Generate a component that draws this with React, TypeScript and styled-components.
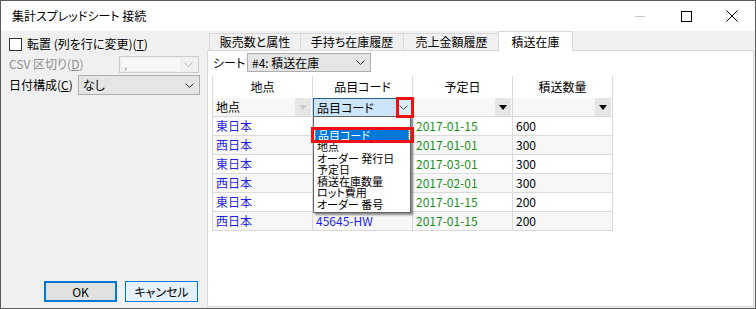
import styled, { createGlobalStyle } from 'styled-components';

const GlobalStyle = createGlobalStyle`
  * { box-sizing: border-box; }
  body {
    margin: 0;
    background: #ffffff;
    font-family: "Noto Sans CJK JP", "Liberation Sans", sans-serif;
    font-size: 12px;
    font-feature-settings: "palt";
    color: #000;
  }
`;

const rows = [
  { region: '東日本', code: '34512-PK', date: '2017-01-15', qty: '600' },
  { region: '西日本', code: '34512-PK', date: '2017-01-01', qty: '300' },
  { region: '東日本', code: '78120-AB', date: '2017-03-01', qty: '300' },
  { region: '西日本', code: '78120-AB', date: '2017-02-01', qty: '300' },
  { region: '東日本', code: '45645-HW', date: '2017-01-15', qty: '200' },
  { region: '西日本', code: '45645-HW', date: '2017-01-15', qty: '200' },
];

const fields = ['地点', 'オーダー 発行日', '予定日', '積送在庫数量', 'ロット費用', 'オーダー 番号'];

const tabs = [
  { label: '販売数と属性', width: 92 },
  { label: '手持ち在庫履歴', width: 104 },
  { label: '売上金額履歴', width: 97 },
];

function Chevron({ color = '#333' }: { color?: string }) {
  return (
    <svg width='9' height='5' viewBox='0 0 9 5'>
      <polyline points='0.5,0.5 4.5,4.5 8.5,0.5' fill='none' stroke={color} strokeWidth='1' />
    </svg>
  );
}

function Triangle({ color = '#000' }: { color?: string }) {
  return (
    <svg width='8' height='5' viewBox='0 0 8 5'>
      <polygon points='0,0 8,0 4,5' fill={color} />
    </svg>
  );
}

export default function App() {
  return (
    <>
      <GlobalStyle />
      <S.Window>
        <S.TitleBar>
          <S.Title>集計スプレッドシート 接続</S.Title>
          <S.WinControls>
            <S.WinButton>
              <svg width='10' height='10' viewBox='0 0 10 10'>
                <line x1='0' y1='5.5' x2='10' y2='5.5' stroke='#c4c4c4' strokeWidth='1' />
              </svg>
            </S.WinButton>
            <S.WinButton>
              <svg width='11' height='11' viewBox='0 0 11 11'>
                <rect x='0.5' y='0.5' width='10' height='10' fill='none' stroke='#000' strokeWidth='1' />
              </svg>
            </S.WinButton>
            <S.WinButton>
              <svg width='12' height='12' viewBox='0 0 12 12'>
                <path d='M0.5 0.5 L11.5 11.5 M11.5 0.5 L0.5 11.5' stroke='#000' strokeWidth='1' />
              </svg>
            </S.WinButton>
          </S.WinControls>
        </S.TitleBar>

        <S.Body>
          <S.LeftPanel>
            <S.OptionRow $h={20}>
              <S.CheckBox />
              <S.Label>
                転置 (列を行に変更)(<u>T</u>)
              </S.Label>
            </S.OptionRow>
            <S.OptionRow $h={18} $mt={1}>
              <S.Label $disabled>
                CSV 区切り(<u>D</u>)
              </S.Label>
              <S.Combo $w={80} $h={17} $disabled>
                <S.ComboField>,</S.ComboField>
                <Chevron color='#b8b8b8' />
              </S.Combo>
            </S.OptionRow>
            <S.OptionRow $h={20} $mt={2}>
              <S.Label>
                日付構成(<u>C</u>)
              </S.Label>
              <S.Combo $w={122} $h={20}>
                <span>なし</span>
                <Chevron />
              </S.Combo>
            </S.OptionRow>
            <S.ButtonRow>
              <S.DialogButton $primary>OK</S.DialogButton>
              <S.DialogButton>キャンセル</S.DialogButton>
            </S.ButtonRow>
          </S.LeftPanel>

          <S.TabArea>
            <S.TabRow>
              {tabs.map((t) => (
                <S.Tab key={t.label} $w={t.width}>
                  {t.label}
                </S.Tab>
              ))}
              <S.Tab $w={75} $active>
                積送在庫
              </S.Tab>
            </S.TabRow>
            <S.TabPanel>
              <S.SheetRow>
                <S.SheetLabel>シート</S.SheetLabel>
                <S.Combo $w={124} $h={19}>
                  <span>#4: 積送在庫</span>
                  <Chevron />
                </S.Combo>
              </S.SheetRow>

              <S.GridWrap>
                <S.Grid>
                  <S.HeaderCell>地点</S.HeaderCell>
                  <S.HeaderCell>品目コード</S.HeaderCell>
                  <S.HeaderCell>予定日</S.HeaderCell>
                  <S.HeaderCell>積送数量</S.HeaderCell>

                  <S.FilterCell>
                    <span>地点</span>
                    <S.FilterButton>
                      <Triangle color='#c9c9c9' />
                    </S.FilterButton>
                  </S.FilterCell>
                  <S.FilterCell>
                    <S.FilterEditor>
                      <span>品目コード</span>
                      <S.EditorButton>
                        <Chevron color='#555' />
                      </S.EditorButton>
                    </S.FilterEditor>
                  </S.FilterCell>
                  <S.FilterCell>
                    <span />
                    <S.FilterButton>
                      <Triangle />
                    </S.FilterButton>
                  </S.FilterCell>
                  <S.FilterCell>
                    <span />
                    <S.FilterButton>
                      <Triangle />
                    </S.FilterButton>
                  </S.FilterCell>

                  {rows.map((r, i) => (
                    <S.Row key={i} $alt={i % 2 === 1}>
                      <S.Cell $color='#1f1ff0'>{r.region}</S.Cell>
                      <S.Cell $color='#1f1ff0'>{r.code}</S.Cell>
                      <S.Cell $color='#1c8f1c'>{r.date}</S.Cell>
                      <S.Cell>{r.qty}</S.Cell>
                    </S.Row>
                  ))}
                </S.Grid>

                <S.DropList>
                  <S.DropItem />
                  <S.DropItem $selected>品目コード</S.DropItem>
                  {fields.map((f) => (
                    <S.DropItem key={f}>{f}</S.DropItem>
                  ))}
                </S.DropList>

                <S.Marker $left={184} $top={21} $w={18} $h={21} />
                <S.Marker $left={99} $top={51} $w={103} $h={16} />
              </S.GridWrap>
            </S.TabPanel>
          </S.TabArea>
        </S.Body>
      </S.Window>
    </>
  );
}

const S = {
  Window: styled.div`
    width: 756px;
    height: 309px;
    border: 1px solid #5a5a5a;
    background: #f0f0f0;
    display: flex;
    flex-direction: column;
    overflow: hidden;
  `,

  TitleBar: styled.div`
    height: 30px;
    flex: none;
    background: #ffffff;
    display: flex;
    align-items: center;
    padding-left: 11px;
  `,

  Title: styled.span`
    font-size: 12px;
    line-height: 14px;
  `,

  WinControls: styled.div`
    margin-left: auto;
    display: flex;
  `,

  WinButton: styled.div`
    width: 46px;
    height: 30px;
    display: flex;
    align-items: center;
    justify-content: center;

    svg {
      display: block;
    }
  `,

  Body: styled.div`
    flex: 1;
    display: flex;
    min-height: 0;
  `,

  LeftPanel: styled.div`
    width: 206px;
    flex: none;
    display: flex;
    flex-direction: column;
    padding: 3px 8px 6px 8px;
  `,

  OptionRow: styled.div<{ $h: number; $mt?: number }>`
    height: ${({ $h }) => $h}px;
    margin-top: ${({ $mt }) => $mt ?? 0}px;
    display: flex;
    align-items: center;
    justify-content: space-between;
    gap: 5px;

    &:first-child {
      justify-content: flex-start;
    }
  `,

  CheckBox: styled.span`
    width: 13px;
    height: 13px;
    flex: none;
    border: 1px solid #333333;
    background: #ffffff;
  `,

  Label: styled.span<{ $disabled?: boolean }>`
    color: ${({ $disabled }) => ($disabled ? '#8f8f8f' : '#000')};
    line-height: 14px;
    white-space: nowrap;

    u {
      text-underline-offset: 1px;
    }
  `,

  Combo: styled.div<{ $w: number; $h: number; $disabled?: boolean }>`
    width: ${({ $w }) => $w}px;
    height: ${({ $h }) => $h}px;
    flex: none;
    display: flex;
    align-items: center;
    justify-content: space-between;
    padding: 0 5px 0 4px;
    border: 1px solid ${({ $disabled }) => ($disabled ? '#cccccc' : '#adadad')};
    background: ${({ $disabled }) => ($disabled ? '#f0f0f0' : '#e5e5e5')};
    line-height: 14px;
    white-space: nowrap;

    svg {
      flex: none;
    }
  `,

  ComboField: styled.span`
    width: 58px;
    height: 13px;
    margin-left: -2px;
    background: #f8f8f8;
    color: #8f8f8f;
    font-size: 11px;
    line-height: 12px;
    padding-left: 2px;
  `,

  ButtonRow: styled.div`
    margin-top: auto;
    display: flex;
    justify-content: flex-end;
    gap: 8px;
    padding-right: 1px;
  `,

  DialogButton: styled.div<{ $primary?: boolean }>`
    width: 73px;
    height: 21px;
    display: flex;
    align-items: center;
    justify-content: center;
    border: ${({ $primary }) => ($primary ? '2px' : '1px')} solid #0078d7;
    background: ${({ $primary }) => ($primary ? '#e1e1e1' : '#e5f1fb')};
    line-height: 14px;
  `,

  TabArea: styled.div`
    flex: 1;
    display: flex;
    flex-direction: column;
    padding: 0 1px 1px 0;
    min-width: 0;
  `,

  TabRow: styled.div`
    height: 19px;
    flex: none;
    display: flex;
    align-items: flex-end;
    padding-left: 2px;
    position: relative;
    z-index: 1;
  `,

  Tab: styled.div<{ $w: number; $active?: boolean }>`
    width: ${({ $w }) => $w}px;
    height: ${({ $active }) => ($active ? 20 : 17)}px;
    margin-left: ${({ $active }) => ($active ? -2 : -1)}px;
    margin-bottom: ${({ $active }) => ($active ? -1 : 0)}px;
    border: 1px solid #d9d9d9;
    border-bottom: none;
    background: ${({ $active }) => ($active ? '#ffffff' : '#f0f0f0')};
    display: flex;
    align-items: center;
    justify-content: center;
    line-height: 14px;
    white-space: nowrap;

    &:first-child {
      margin-left: 0;
    }
  `,

  TabPanel: styled.div`
    flex: 1;
    background: #ffffff;
    border: 1px solid #d9d9d9;
    padding: 2px 4px;
  `,

  SheetRow: styled.div`
    height: 19px;
    display: flex;
    align-items: center;
  `,

  SheetLabel: styled.span`
    width: 35px;
    padding-left: 1px;
    line-height: 14px;
  `,

  GridWrap: styled.div`
    position: relative;
    margin-top: 4px;
    width: 401px;
  `,

  Grid: styled.div`
    display: grid;
    grid-template-columns: repeat(4, 100px);
    border-left: 1px solid #dadada;
  `,

  HeaderCell: styled.div`
    height: 22px;
    display: flex;
    align-items: center;
    justify-content: center;
    border-right: 1px solid #dadada;
    background: #ffffff;
    line-height: 14px;
  `,

  FilterCell: styled.div`
    height: 19px;
    display: flex;
    align-items: center;
    justify-content: space-between;
    padding-left: 3px;
    border-right: 1px solid #dadada;
    border-bottom: 1px solid #dadada;
    background: #f7f7f7;
    line-height: 14px;
    position: relative;
  `,

  FilterButton: styled.div`
    width: 16px;
    height: 18px;
    display: flex;
    align-items: center;
    justify-content: center;
    background: #e6e6e6;
    margin-right: 1px;
  `,

  FilterEditor: styled.div`
    position: absolute;
    left: 0;
    top: 0;
    right: 0;
    height: 19px;
    display: flex;
    align-items: center;
    justify-content: space-between;
    padding-left: 3px;
    border: 1px solid #2b5f92;
    background: #cce4f7;
  `,

  EditorButton: styled.div`
    width: 15px;
    height: 17px;
    display: flex;
    align-items: center;
    justify-content: center;
    background: #dcecf9;
  `,

  Row: styled.div<{ $alt: boolean }>`
    display: contents;

    & > div {
      background: ${({ $alt }) => ($alt ? '#f7f7f7' : '#ffffff')};
    }
  `,

  Cell: styled.div<{ $color?: string }>`
    height: 19px;
    display: flex;
    align-items: center;
    padding-left: 3px;
    border-right: 1px solid #dadada;
    border-bottom: 1px solid #dadada;
    color: ${({ $color }) => $color ?? '#000'};
    line-height: 14px;
    white-space: nowrap;
  `,

  DropList: styled.div`
    position: absolute;
    left: 101px;
    top: 40px;
    width: 98px;
    height: 97px;
    border: 1px solid #646464;
    background: #ffffff;
    box-shadow: 2px 2px 2px rgba(0, 0, 0, 0.45);
    padding: 0 1px;
    z-index: 2;
    font-size: 11px;
  `,

  DropItem: styled.div<{ $selected?: boolean }>`
    height: ${({ $selected }) => ($selected ? 13 : 11.5)}px;
    line-height: ${({ $selected }) => ($selected ? 13 : 11.5)}px;
    padding-left: 2px;
    white-space: nowrap;
    color: ${({ $selected }) => ($selected ? '#ffffff' : '#000')};
    background: ${({ $selected }) => ($selected ? '#0078d7' : 'transparent')};
    border: ${({ $selected }) => ($selected ? '1px dotted #f0a040' : 'none')};
    margin-top: ${({ $selected }) => ($selected ? -0.5 : 0)}px;
  `,

  Marker: styled.div<{ $left: number; $top: number; $w: number; $h: number }>`
    position: absolute;
    left: ${({ $left }) => $left}px;
    top: ${({ $top }) => $top}px;
    width: ${({ $w }) => $w}px;
    height: ${({ $h }) => $h}px;
    border: 3px solid #ee1111;
    z-index: 3;
    pointer-events: none;
  `,
};
